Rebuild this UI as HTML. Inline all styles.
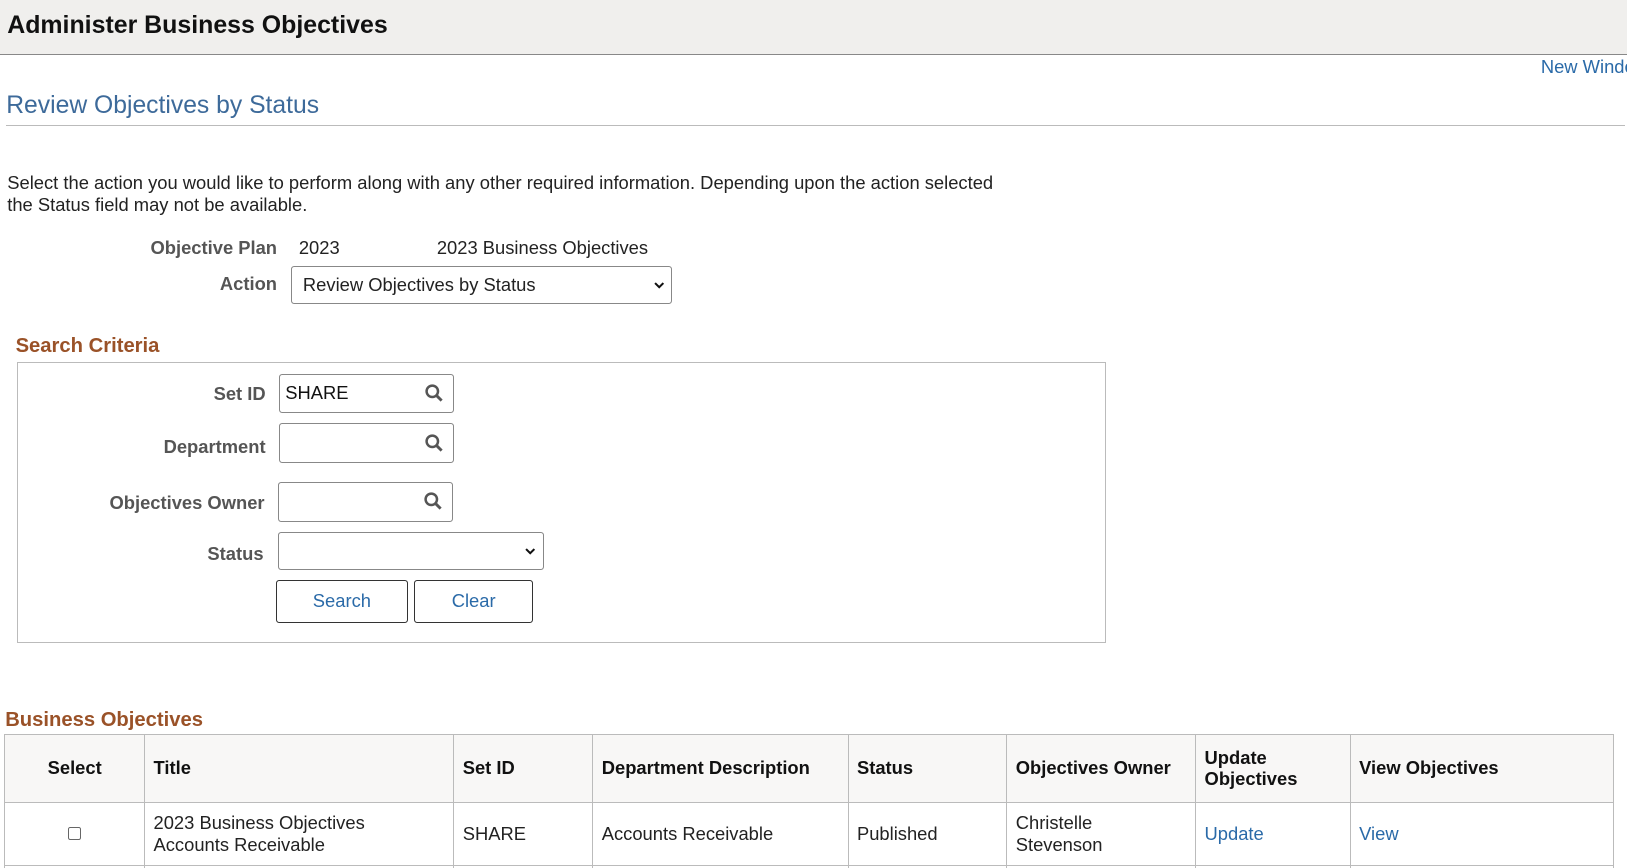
<!DOCTYPE html>
<html><head><style>
body{margin:0;width:1627px;height:868px;overflow:hidden;font-family:"Liberation Sans",Arial,sans-serif;background:#fff;color:#222}
#w{position:relative;zoom:1.0376;width:1568px;height:837px;overflow:hidden}
.a{position:absolute;white-space:nowrap}
.lbl{font-weight:bold;color:#555;font-size:17.7px;text-align:right}
.box{position:absolute;border:1px solid #888;border-radius:3px;background:#fff;box-sizing:border-box}
.btn{position:absolute;border:1px solid #333;border-radius:3px;background:#fff;color:#2a6aa8;font-size:17.7px;text-align:center;box-sizing:border-box}
.chev{position:absolute;right:6px;top:50%;margin-top:-4px}
table{position:absolute;left:4px;top:707px;border-collapse:collapse;font-size:17.7px;table-layout:fixed;width:1551px}
td,th{border:1px solid #bbb;padding:0 8px;text-align:left;overflow:hidden;white-space:nowrap}
th{background:#f8f7f6;height:65px;font-weight:bold;color:#111}
td{height:60px;color:#222}
a{color:#2a6aa8;text-decoration:none}
</style></head><body><div id="w">
<div class="a" style="left:0;top:0;width:1568px;height:52px;background:#f0efed;border-bottom:1px solid #888"></div>
<div class="a" style="left:7px;top:11px;font-size:24px;font-weight:bold;color:#111">Administer Business Objectives</div>
<div class="a" style="left:1485px;top:54px;font-size:17.7px;color:#2a6aa8">New Window</div>
<div class="a" style="left:6px;top:89px;font-size:23.8px;color:#3d6a9a">Review Objectives by Status</div>
<div class="a" style="left:6px;top:120px;width:1560px;border-top:1px solid #bbb"></div>
<div class="a" style="left:7px;top:166px;font-size:17.7px;line-height:21px">Select the action you would like to perform along with any other required information. Depending upon the action selected<br>the Status field may not be available.</div>
<div class="a lbl" style="left:60px;width:207px;top:228px">Objective Plan</div>
<div class="a" style="left:288px;top:228px;font-size:17.7px">2023</div>
<div class="a" style="left:421px;top:228px;font-size:17.7px">2023 Business Objectives</div>
<div class="a lbl" style="left:60px;width:207px;top:263px">Action</div>
<div class="box" style="left:280px;top:256px;width:368px;height:37px"><span class="a" style="left:11px;top:7px;font-size:17.7px;color:#222">Review Objectives by Status</span><svg class="chev" width="12" height="8" viewBox="0 0 12 8"><path d="M2 2l4 4 4-4" stroke="#111" stroke-width="2" fill="none"/></svg></div>
<div class="a" style="left:15px;top:323px;font-size:19.5px;font-weight:bold;color:#9a5228">Search Criteria</div>
<div class="a" style="left:16px;top:349px;width:1048px;height:269px;border:1px solid #bbb"></div>
<div class="a lbl" style="left:60px;width:196px;top:369px">Set ID</div>
<div class="box" style="left:269px;top:360px;width:169px;height:38px"><span class="a" style="left:5px;top:7px;font-size:17.7px;color:#111">SHARE</span></div>
<div class="a lbl" style="left:60px;width:196px;top:420px">Department</div>
<div class="box" style="left:269px;top:408px;width:169px;height:38px"></div>
<div class="a lbl" style="left:60px;width:195px;top:474px">Objectives Owner</div>
<div class="box" style="left:268px;top:465px;width:169px;height:38px"></div>
<svg class="a" style="left:409px;top:369px" width="20" height="20" viewBox="0 0 20 20"><circle cx="8" cy="8" r="5.5" stroke="#555" stroke-width="2.4" fill="none"/><path d="M12 12l5 5" stroke="#555" stroke-width="2.8"/></svg>
<svg class="a" style="left:409px;top:417px" width="20" height="20" viewBox="0 0 20 20"><circle cx="8" cy="8" r="5.5" stroke="#555" stroke-width="2.4" fill="none"/><path d="M12 12l5 5" stroke="#555" stroke-width="2.8"/></svg>
<svg class="a" style="left:408px;top:473px" width="20" height="20" viewBox="0 0 20 20"><circle cx="8" cy="8" r="5.5" stroke="#555" stroke-width="2.4" fill="none"/><path d="M12 12l5 5" stroke="#555" stroke-width="2.8"/></svg>
<div class="a lbl" style="left:60px;width:194px;top:523px">Status</div>
<div class="box" style="left:268px;top:513px;width:256px;height:36px"><svg class="chev" width="12" height="8" viewBox="0 0 12 8"><path d="M2 2l4 4 4-4" stroke="#111" stroke-width="2" fill="none"/></svg></div>
<div class="btn" style="left:266px;top:559px;width:127px;height:41px;line-height:39px">Search</div>
<div class="btn" style="left:399px;top:559px;width:115px;height:41px;line-height:39px">Clear</div>
<div class="a" style="left:5px;top:683px;font-size:19.5px;font-weight:bold;color:#9a5228">Business Objectives</div>
<table>
<colgroup><col style="width:135px"><col style="width:298px"><col style="width:134px"><col style="width:246px"><col style="width:153px"><col style="width:182px"><col style="width:149px"><col style="width:254px"></colgroup>
<tr><th style="text-align:center">Select</th><th>Title</th><th>Set ID</th><th>Department Description</th><th>Status</th><th>Objectives Owner</th><th style="line-height:21px">Update<br>Objectives</th><th>View Objectives</th></tr>
<tr><td style="text-align:center"><span style="display:inline-block;width:11px;height:11px;border:1px solid #666;border-radius:2px"></span></td><td style="line-height:21px">2023 Business Objectives<br>Accounts Receivable</td><td>SHARE</td><td>Accounts Receivable</td><td>Published</td><td style="line-height:21px">Christelle<br>Stevenson</td><td><a>Update</a></td><td><a>View</a></td></tr>
<tr><td></td><td></td><td></td><td></td><td></td><td></td><td></td><td></td></tr>
</table>
</div></body></html>
